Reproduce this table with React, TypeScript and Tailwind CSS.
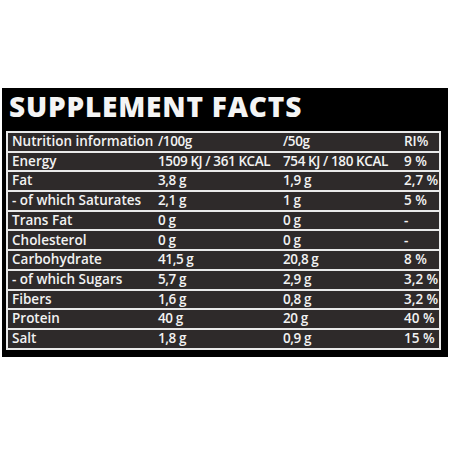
import React from "react";

const rows: [string, string, string, string][] = [
  ["Nutrition information", "/100g", "/50g", "RI%"],
  ["Energy", "1509 KJ / 361 KCAL", "754 KJ / 180 KCAL", "9 %"],
  ["Fat", "3,8 g", "1,9 g", "2,7 %"],
  ["- of which Saturates", "2,1 g", "1 g", "5 %"],
  ["Trans Fat", "0 g", "0 g", "-"],
  ["Cholesterol", "0 g", "0 g", "-"],
  ["Carbohydrate", "41,5 g", "20,8 g", "8 %"],
  ["- of which Sugars", "5,7 g", "2,9 g", "3,2 %"],
  ["Fibers", "1,6 g", "0,8 g", "3,2 %"],
  ["Protein", "40 g", "20 g", "40 %"],
  ["Salt", "1,8 g", "0,9 g", "15 %"],
];

export default function App() {
  return (
    <div className="w-[450px] h-[450px] bg-white pt-[88px] pl-[2px] pr-[2px] font-['Open_Sans',sans-serif]">
      <div className="bg-black pl-[4px] pr-[7px] pb-[7px]">
        <h1 className="pt-[4px] pl-[3px] text-[28px] leading-none font-extrabold text-[#f4f4f4] tracking-[0.8px]">
          SUPPLEMENT FACTS
        </h1>
        <div className="mt-[11px] border-2 border-[#e9e9e9] bg-[#e9e9e9] flex flex-col gap-[2px]">
          {rows.map((r) => (
            <div
              key={r[0]}
              className="h-[17.7px] bg-[#2e2a2a] grid grid-cols-[146px_125px_121px_1fr] items-center pl-[4px] text-[13.5px] leading-none font-semibold text-[#f2f2f2] whitespace-nowrap"
            >
              <span className="text-[13.5px]">{r[0]}</span>
              <span className="tracking-[-0.4px]">{r[1]}</span>
              <span className="tracking-[-0.4px]">{r[2]}</span>
              <span>{r[3]}</span>
            </div>
          ))}
        </div>
      </div>
    </div>
  );
}
